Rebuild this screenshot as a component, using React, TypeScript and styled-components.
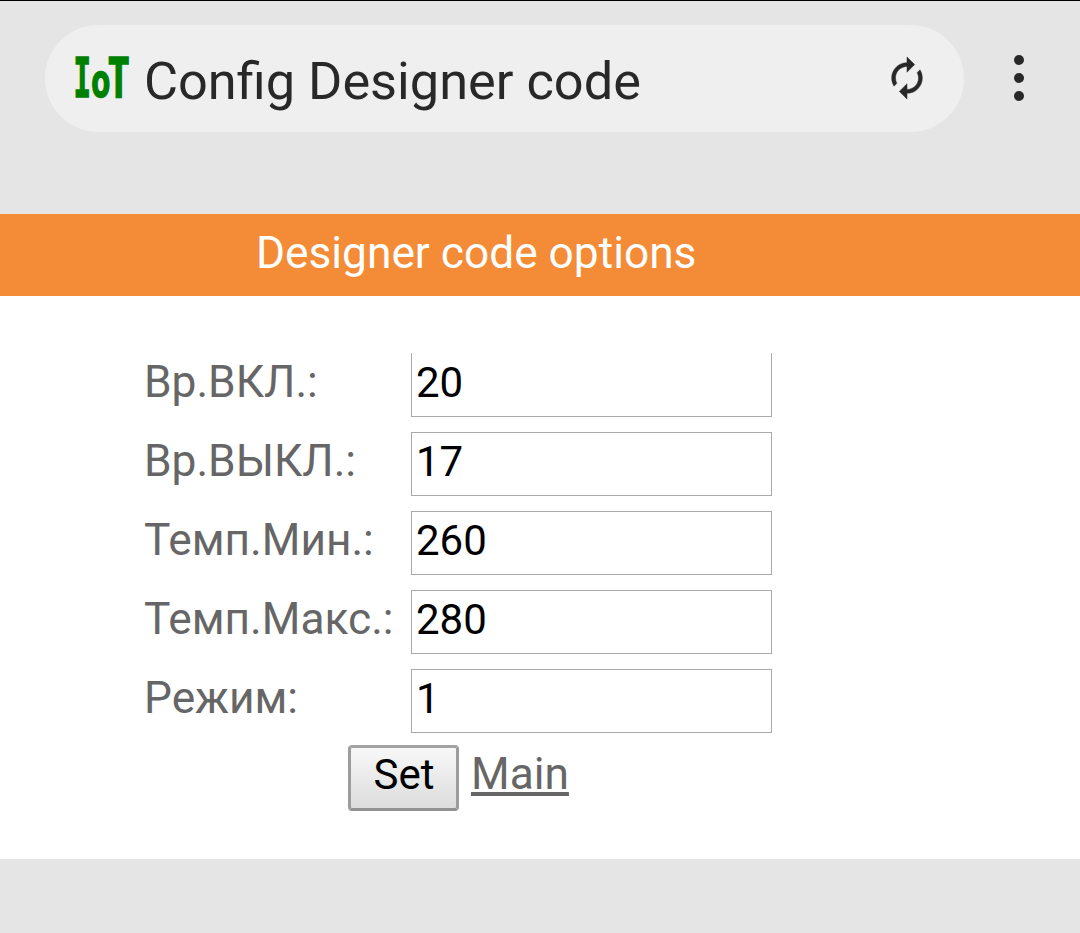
import React from "react";
import styled, { createGlobalStyle } from "styled-components";
import { MdAutorenew } from "react-icons/md";

const GlobalStyle = createGlobalStyle`
  * { box-sizing: border-box; }
  body {
    margin: 0;
    background: #e5e5e5;
    font-family: Roboto, "Noto Sans", sans-serif;
  }
`;

const Screen = styled.div`
  display: flex;
  flex-direction: column;
  height: 933px;
  border-top: 1px solid #000;
  background: #e5e5e5;
`;

const Toolbar = styled.header`
  display: flex;
  align-items: flex-start;
  height: 213px;
  padding: 24px 0 0 45px;
`;

const AddressBar = styled.div`
  display: flex;
  align-items: center;
  width: 919px;
  height: 107px;
  padding: 0 34px 0 26px;
  border-radius: 54px;
  background: #efefef;
`;

const Logo = styled.svg`
  display: block;
  flex: none;
  width: 62px;
  height: 64px;
  overflow: visible;
`;

const LogoLetter = styled.text<{ $size: number }>`
  font: bold ${({ $size }) => $size}px "DejaVu Sans Mono", monospace;
  fill: #008000;
  stroke: #008000;
  stroke-width: 1.6px;
`;

const PageTitle = styled.div`
  flex: 1;
  padding: 5px 0 0 11px;
  color: #282828;
  font-size: 52.3px;
  line-height: 60px;
  white-space: nowrap;
`;

const ReloadIcon = styled(MdAutorenew)`
  width: 46px;
  height: 46px;
  margin-bottom: 2px;
  color: #282828;

  path:not([fill="none"]) {
    stroke: #282828;
    stroke-width: 0.25px;
  }
  path[fill="none"] {
    stroke: none;
  }
`;

const MenuDots = styled.div`
  display: flex;
  flex-direction: column;
  gap: 8px;
  padding: 30px 0 0 50px;
`;

const Dot = styled.span`
  width: 10px;
  height: 10px;
  border-radius: 50%;
  background: #282828;
`;

const Banner = styled.h1`
  height: 82px;
  margin: 0;
  padding: 11px 0 0 256px;
  background: #f48c37;
  color: #fff;
  font-size: 44.25px;
  font-weight: 400;
  line-height: 56px;
`;

const Panel = styled.form`
  display: flex;
  flex-direction: column;
  height: 563px;
  padding: 57px 0 0 144px;
  background: #fff;
`;

const Fields = styled.div`
  display: flex;
  flex-direction: column;
  gap: 15px;
`;

const Field = styled.label`
  display: grid;
  grid-template-columns: 267px 361px;
  height: 64px;
  color: #666;
  font-size: 44.25px;
  line-height: 59px;
  white-space: nowrap;
`;

const Input = styled.input<{ $openTop?: boolean }>`
  width: 361px;
  height: 64px;
  padding: ${({ $openTop }) => ($openTop ? "1px" : "0")} 5px 5px 4px;
  border: 1px solid #a9a9a9;
  border-top-width: ${({ $openTop }) => ($openTop ? "0" : "1px")};
  border-radius: 0;
  outline: none;
  background: #fff;
  color: #000;
  font: 42px Roboto, sans-serif;
`;

const Actions = styled.div`
  display: flex;
  gap: 12px;
  padding: 12px 0 0 204px;
`;

const SetButton = styled.button`
  width: 111px;
  height: 66px;
  padding: 0 0 8px 1px;
  border: 3px solid #999;
  border-color: #a3a3a3 #9c9c9c #919191;
  border-radius: 4px;
  background: linear-gradient(#f8f8f8, #dcdcdc);
  color: #000;
  font: 42px Roboto, sans-serif;
`;

const MainLink = styled.a`
  color: #666;
  font-size: 44.25px;
  line-height: 59px;
  text-decoration: underline;
`;

const logoLetters = [
  { char: "I", x: 2.4, y: 50.1, width: 17.5, size: 54.5 },
  { char: "o", x: 20, y: 49.8, width: 19.5, size: 47 },
  { char: "T", x: 36.6, y: 50.1, width: 22.4, size: 54.5 },
];

const fields = [
  { label: "Вр.ВКЛ.:", value: "20" },
  { label: "Вр.ВЫКЛ.:", value: "17" },
  { label: "Темп.Мин.:", value: "260" },
  { label: "Темп.Макс.:", value: "280" },
  { label: "Режим:", value: "1" },
];

export default function App() {
  return (
    <Screen>
      <GlobalStyle />
      <Toolbar>
        <AddressBar>
          <Logo viewBox="0 0 62 64">
            {logoLetters.map(({ char, x, y, width, size }) => (
              <LogoLetter
                key={char}
                $size={size}
                x={x}
                y={y}
                textLength={width}
                lengthAdjust="spacingAndGlyphs"
              >
                {char}
              </LogoLetter>
            ))}
          </Logo>
          <PageTitle>Config Designer code</PageTitle>
          <ReloadIcon />
        </AddressBar>
        <MenuDots>
          <Dot />
          <Dot />
          <Dot />
        </MenuDots>
      </Toolbar>
      <Banner>Designer code options</Banner>
      <Panel>
        <Fields>
          {fields.map(({ label, value }, index) => (
            <Field key={label}>
              {label}
              <Input defaultValue={value} $openTop={index === 0} />
            </Field>
          ))}
        </Fields>
        <Actions>
          <SetButton type="button">Set</SetButton>
          <MainLink href="#">Main</MainLink>
        </Actions>
      </Panel>
    </Screen>
  );
}
